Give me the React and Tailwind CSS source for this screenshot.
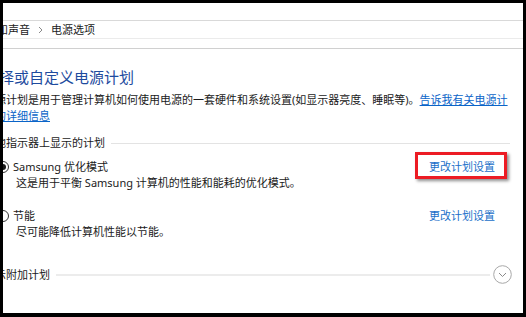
const font = "font-['Noto_Sans','Noto_Sans_CJK_SC',sans-serif]";

const Radio = ({ checked }) => (
    <span className="w-[12px] h-[12px] rounded-full border border-[#333] bg-white flex items-center justify-center shrink-0">
        {checked && <span className="w-[6px] h-[6px] rounded-full bg-[#1a1a1a]" />}
    </span>
);

const Plan = ({ name, desc, checked, highlight, className }) => (
    <div className={className}>
        <div className="flex items-center h-[16px] pr-[17px]">
            <div className="ml-[13px]">
                <Radio checked={checked} />
            </div>
            <span className="ml-[4px] text-[#1a1a1a]">{name}</span>
            <div className="flex-1" />
            <div className="relative">
                <a className="text-[#1a6fc9] cursor-pointer">更改计划设置</a>
                {highlight && (
                    <span className="absolute left-[-14px] right-[-12px] top-[-7px] bottom-[-4px] border-[3px] border-[#ec1c24] shadow-[2px_2px_3px_rgba(0,0,0,0.45)]" />
                )}
            </div>
        </div>
        <div className="ml-[32px] leading-[16px] text-[#1a1a1a]">{desc}</div>
    </div>
);

export default function App() {
    return (
        <div className={`w-[526px] h-[317px] bg-black pt-[3px] pl-[3px] pr-[3px] pb-[4px] ${font}`}>
            <div className="h-full bg-white overflow-hidden text-[11px] leading-[16px]">
                {/* top bars */}
                <div className="h-[18px] border-b border-[#d9d9d9]" />
                <div className="h-[18px] border-b border-[#ebebeb] flex items-center whitespace-nowrap text-[#1a1a1a]">
                    <span className="ml-[-28px]">硬件和声音</span>
                    <svg className="ml-[8px]" width="5" height="8" viewBox="0 0 5 8">
                        <path d="M1 1 L4 4 L1 7" fill="none" stroke="#8a8a8a" strokeWidth="1" />
                    </svg>
                    <span className="ml-[8px]">电源选项</span>
                </div>
                <div className="h-[10px] border-b border-[#d0d0d0]" />

                {/* content */}
                <div className="ml-[-19px] mr-[11px] whitespace-nowrap">
                    <h1 className="mt-[18px] text-[15px] leading-[20px] text-[#1e4b9e] font-normal">选择或自定义电源计划</h1>

                    <div className="mt-[5px] text-[#1a1a1a]">
                        <div>
                            电源计划是用于管理计算机如何使用电源的一套硬件和系统设置(如显示器亮度、睡眠等)。
                            <a className="text-[#0a64c8] underline cursor-pointer">告诉我有关电源计</a>
                        </div>
                        <div>
                            <a className="text-[#0a64c8] underline cursor-pointer">划的详细信息</a>
                        </div>
                    </div>

                    <div className="mt-[11px] flex items-center text-[#1a1a1a]">
                        <span>电池指示器上显示的计划</span>
                        <div className="flex-1 h-px bg-[#e3e3e3] ml-[6px] mr-[2px]" />
                    </div>

                    <Plan
                        className="mt-[8px]"
                        checked
                        highlight
                        name="Samsung 优化模式"
                        desc="这是用于平衡 Samsung 计算机的性能和能耗的优化模式。"
                    />
                    <Plan
                        className="mt-[17px]"
                        name="节能"
                        desc="尽可能降低计算机性能以节能。"
                    />

                    <div className="mt-[25px] flex items-center text-[#1a1a1a]">
                        <span>显示附加计划</span>
                        <div className="flex-1 h-[2px] bg-[#ececec] ml-[6px] mr-[3px]" />
                        <svg width="19" height="19" viewBox="0 0 19 19">
                            <circle cx="9.5" cy="9.5" r="8.8" fill="white" stroke="#a8a8a8" strokeWidth="1" />
                            <path d="M6 8 L9.5 11.5 L13 8" fill="none" stroke="#8a8a8a" strokeWidth="1" />
                        </svg>
                    </div>
                </div>
            </div>
        </div>
    );
}
